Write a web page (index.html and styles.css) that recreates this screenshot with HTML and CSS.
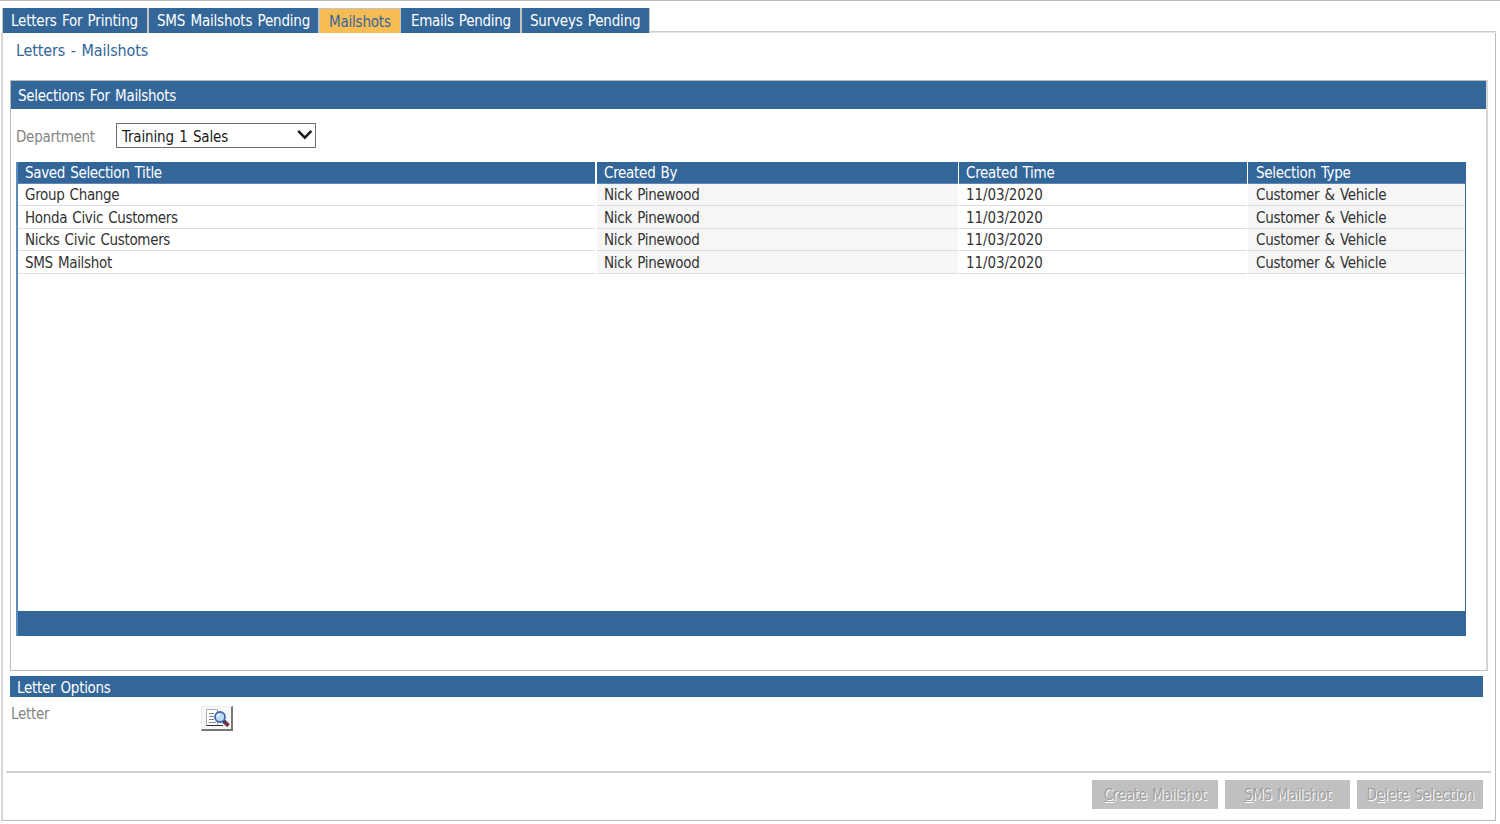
FILE: index.html
```html
<!DOCTYPE html>
<html lang="en">
<head>
<meta charset="utf-8">
<title>Letters - Mailshots</title>
<link rel="stylesheet" href="styles.css">
</head>
<body>
<nav class="tabs">
  <a class="tab tab-letters"><span>Letters For Printing</span></a>
  <a class="tab tab-sms"><span>SMS Mailshots Pending</span></a>
  <a class="tab tab-active"><span>Mailshots</span></a>
  <a class="tab tab-emails"><span>Emails Pending</span></a>
  <a class="tab tab-surveys"><span>Surveys Pending</span></a>
  <i class="tab-rule"></i>
</nav>
<main class="page">
  <h1 class="title"><span>Letters - Mailshots</span></h1>
  <section class="selections">
    <h2 class="bar"><span>Selections For Mailshots</span></h2>
    <div class="department">
      <label><span>Department</span></label>
      <div class="select"><span>Training 1 Sales</span>
        <svg width="16" height="12" viewBox="0 0 16 12"><path d="M1.200 1.800 L7.800 8.600 L14.400 1.800" fill="none" stroke="#1a1a1a" stroke-width="2.500"/></svg>
      </div>
    </div>
    <div class="grid">
      <div class="row head"><div><span>Saved Selection Title</span></div><div><span>Created By</span></div><div><span>Created Time</span></div><div><span>Selection Type</span></div></div>
      <div class="row"><div><span>Group Change</span></div><div><span>Nick Pinewood</span></div><div class="date"><span>11/03/2020</span></div><div><span>Customer &amp; Vehicle</span></div></div>
      <div class="row tall"><div><span>Honda Civic Customers</span></div><div><span>Nick Pinewood</span></div><div class="date"><span>11/03/2020</span></div><div><span>Customer &amp; Vehicle</span></div></div>
      <div class="row"><div><span>Nicks Civic Customers</span></div><div><span>Nick Pinewood</span></div><div class="date"><span>11/03/2020</span></div><div><span>Customer &amp; Vehicle</span></div></div>
      <div class="row tall"><div><span>SMS Mailshot</span></div><div><span>Nick Pinewood</span></div><div class="date"><span>11/03/2020</span></div><div><span>Customer &amp; Vehicle</span></div></div>
      <div class="grid-foot"></div>
    </div>
  </section>
  <section class="options">
    <h2 class="bar slim"><span>Letter Options</span></h2>
    <div class="letter">
      <label><span>Letter</span></label>
      <button class="lookup" aria-label="Find letter">
        <svg width="26" height="20" viewBox="0 0 26 20">
          <path d="M1.500 1.500H12.500V17.500H1.500Z" fill="#fff" stroke="#aaa"/>
          <path d="M1.500 17.500H18" stroke="#333"/>
          <path d="M4 5.500H9M4 8.500H9M4 11.500H9M4 14.500H11" stroke="#888"/>
          <path d="M18.500 13L23.500 17.800" stroke="#7b3540" stroke-width="4"/>
          <path d="M18 12.500L20 14.500" stroke="#223a78" stroke-width="3"/>
          <circle cx="15" cy="9" r="5" fill="#b9dcf5" stroke="#4767ae" stroke-width="1.800"/>
          <path d="M12.500 8.500Q13 6.500 15 6.500" fill="none" stroke="#fff" stroke-width="1.500"/>
        </svg>
      </button>
    </div>
  </section>
  <footer class="actions">
    <button><span><u>C</u>reate Mailshot</span></button>
    <button><span><u>S</u>MS Mailshot</span></button>
    <button><span>D<u>e</u>lete Selection</span></button>
  </footer>
</main>
</body>
</html>
```
FILE: styles.css
```css
* { box-sizing: border-box; }
body { margin: 0; height: 824px; overflow: hidden; background: #fff; border-top: 1px solid #b9b9b9; font: 15px/20px "DejaVu Sans Condensed", "Noto Sans", sans-serif; letter-spacing: -0.28px; word-spacing: 1.2px; color: #333; white-space: nowrap; }
h1, h2 { margin: 0; font-size: inherit; font-weight: 400; }
.tabs { display: flex; height: 32px; padding: 7px 4px 0 2px; letter-spacing: -0.2px; }
.tab { height: 25px; line-height: 26px; padding-left: 8px; background: #336699; color: #fff; border-left: 1px solid #c4c4c4; }
.tab-letters { width: 145px; }
.tab-sms { width: 171px; border-left-width: 2px; }
.tab-active { width: 83px; padding-left: 9px; border-left-width: 2px; border-top: 1px solid #c4c4c4; border-right: 1px solid #c4c4c4; background: #f7bc54; color: #336699; }
.tab-emails { width: 119px; padding-left: 10px; border-left: 0; letter-spacing: -0.3px; }
.tab-surveys { width: 130px; border-left-width: 2px; border-right: 1px solid #c4c4c4; }
.tab-rule { flex: 1; height: 2px; margin-top: 23px; background: #ccc; border-bottom: 1px solid #e4e4e4; }
.page { width: 1495px; height: 788px; margin-left: 1px; border: solid #b9b9b9; border-width: 0 1px 1px 2px; border-left-color: #d6d6d6; }
.title { height: 47px; padding: 8px 0 0 13px; color: #336699; font-size: 16px; letter-spacing: -0.14px; }
.selections { margin-left: 7px; width: 1478px; height: 591px; border: 1px solid #bcbcbc; border-right: 2px solid #d4d4d4; }
.bar { height: 28px; padding: 5px 7px; background: #336699; color: #fff; }
.department { display: flex; height: 53px; padding: 14px 0 0 5px; color: #858585; }
.department label { width: 100px; padding-top: 4px; }
.select { width: 200px; height: 25px; padding: 3px 2px 0 5px; display: flex; justify-content: space-between; border: 1px solid #707070; color: #1c1c1c; letter-spacing: -0.15px; }
.select svg { margin-top: 2px; }
.grid { width: 1450px; height: 474px; margin-left: 5px; display: flex; flex-direction: column; border: solid #336699; border-width: 0 1px 0 2px; border-left-color: #5e8cba; }
.row { display: grid; grid-template-columns: 578px 361px 288px 217px; column-gap: 1px; height: 22px; }
.row > div { padding: 2px 0 0 7px; line-height: 19px; border-bottom: 1px solid #dedede; }
.row > div:first-child { margin-right: 1px; letter-spacing: -0.33px; }
.row > div:last-child { padding-left: 8px; }
.row > div:nth-child(even) { background: #f6f6f6; }
.date { letter-spacing: -0.1px; }
.row.tall { height: 23px; }
.row.tall > div { padding-top: 3px; }
.row.head > div { background: #336699; color: #fff; border-color: #6088b2; }
.grid-foot { height: 25px; margin-top: auto; background: #336699; }
.options { margin: 5px 0 0 7px; width: 1473px; height: 95px; }
.slim { height: 21px; padding-top: 3px; line-height: 19px; }
.letter { display: flex; color: #858585; padding-left: 1px; }
.letter label { width: 190px; padding-top: 7px; }
.lookup { width: 32px; height: 25px; margin-top: 9px; padding: 1px 3px; border: solid #777; border-width: 1px 2px 2px 1px; border-top-color: #eee; border-left-color: #eee; background: #f8f8f8; }
.lookup svg { display: block; }
.actions { display: flex; justify-content: flex-end; gap: 7px; margin: 0 4px 0 3px; padding: 7px 8px 0 0; border-top: 2px solid #d2d2d2; }
.actions button { width: 125.600px; height: 29px; padding: 0; border: 0; background: #c0c0c0; color: #a0a0a0; font: inherit; letter-spacing: inherit; word-spacing: inherit; text-shadow: 1px 1px #fff; }
```
